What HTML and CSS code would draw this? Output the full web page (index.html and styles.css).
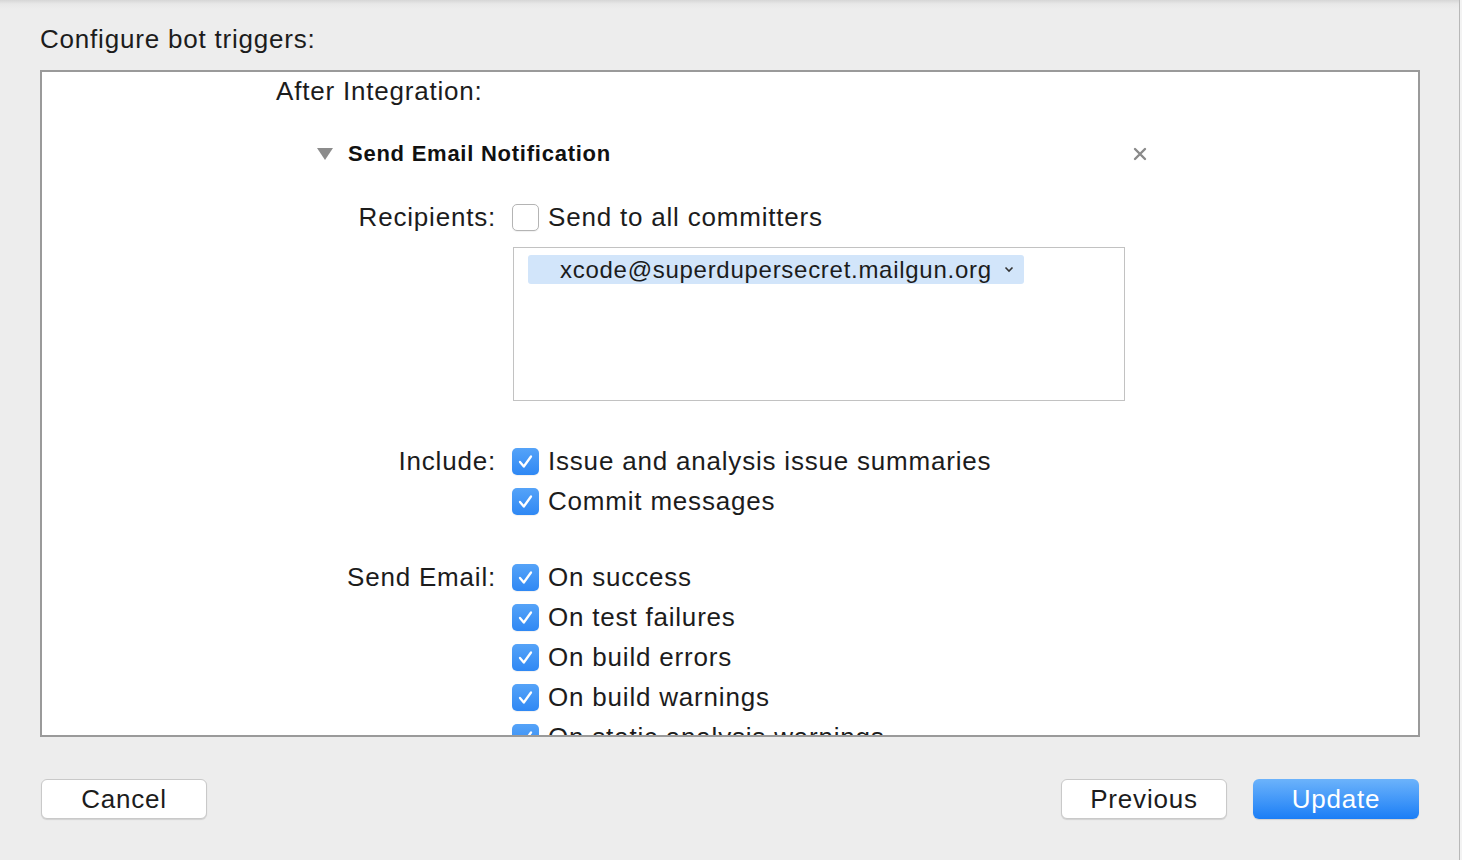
FILE: index.html
```html
<!DOCTYPE html>
<html>
<head>
<meta charset="utf-8">
<link rel="stylesheet" href="styles.css">
</head>
<body>
<div class="window">
  <div class="sheet">
    <div class="title">Configure bot triggers:</div>
    <div class="panel">
      <div class="after">After Integration:</div>
      <div class="section-head">
        <div class="head-left">
          <svg class="disclosure" width="16" height="12" viewBox="0 0 16 12"><polygon points="0,0 16,0 8,12" fill="#8c8c8c"/></svg>
          <span class="head-title">Send Email Notification</span>
        </div>
        <svg class="close" width="14" height="14" viewBox="0 0 14 14"><path d="M2 2 L12 12 M12 2 L2 12" stroke="#8a8a8a" stroke-width="2.4" stroke-linecap="round"/></svg>
      </div>

      <div class="row first">
        <div class="label">Recipients:</div>
        <div class="check"></div>
        <div class="text">Send to all committers</div>
      </div>
      <div class="recipients">
        <div class="token">xcode@superdupersecret.mailgun.org<svg class="chev" width="10" height="7" viewBox="0 0 10 7"><path d="M1.5 1.5 L5 5 L8.5 1.5" stroke="#333" stroke-width="1.6" fill="none"/></svg></div>
      </div>

      <div class="row gap40">
        <div class="label">Include:</div>
        <div class="check on"><svg width="27" height="27" viewBox="0 0 27 27"><path d="M8 14 L11.8 18.5 L19 8.5" stroke="#fff" stroke-width="2.3" fill="none" stroke-linecap="round" stroke-linejoin="round"/></svg></div>
        <div class="text">Issue and analysis issue summaries</div>
      </div>
      <div class="row">
        <div class="label"></div>
        <div class="check on"><svg width="27" height="27" viewBox="0 0 27 27"><path d="M8 14 L11.8 18.5 L19 8.5" stroke="#fff" stroke-width="2.3" fill="none" stroke-linecap="round" stroke-linejoin="round"/></svg></div>
        <div class="text">Commit messages</div>
      </div>

      <div class="row gap36">
        <div class="label">Send Email:</div>
        <div class="check on"><svg width="27" height="27" viewBox="0 0 27 27"><path d="M8 14 L11.8 18.5 L19 8.5" stroke="#fff" stroke-width="2.3" fill="none" stroke-linecap="round" stroke-linejoin="round"/></svg></div>
        <div class="text">On success</div>
      </div>
      <div class="row">
        <div class="label"></div>
        <div class="check on"><svg width="27" height="27" viewBox="0 0 27 27"><path d="M8 14 L11.8 18.5 L19 8.5" stroke="#fff" stroke-width="2.3" fill="none" stroke-linecap="round" stroke-linejoin="round"/></svg></div>
        <div class="text">On test failures</div>
      </div>
      <div class="row">
        <div class="label"></div>
        <div class="check on"><svg width="27" height="27" viewBox="0 0 27 27"><path d="M8 14 L11.8 18.5 L19 8.5" stroke="#fff" stroke-width="2.3" fill="none" stroke-linecap="round" stroke-linejoin="round"/></svg></div>
        <div class="text">On build errors</div>
      </div>
      <div class="row">
        <div class="label"></div>
        <div class="check on"><svg width="27" height="27" viewBox="0 0 27 27"><path d="M8 14 L11.8 18.5 L19 8.5" stroke="#fff" stroke-width="2.3" fill="none" stroke-linecap="round" stroke-linejoin="round"/></svg></div>
        <div class="text">On build warnings</div>
      </div>
      <div class="row">
        <div class="label"></div>
        <div class="check on"><svg width="27" height="27" viewBox="0 0 27 27"><path d="M8 14 L11.8 18.5 L19 8.5" stroke="#fff" stroke-width="2.3" fill="none" stroke-linecap="round" stroke-linejoin="round"/></svg></div>
        <div class="text">On static analysis warnings</div>
      </div>
    </div>

    <div class="buttons">
      <div class="btn">Cancel</div>
      <div class="spacer"></div>
      <div class="btn">Previous</div>
      <div class="btn primary">Update</div>
    </div>
  </div>
  <div class="edge"></div>
</div>
</body>
</html>
```
FILE: styles.css
```css
html, body {
  margin: 0;
  padding: 0;
}
body {
  width: 1462px;
  height: 860px;
  overflow: hidden;
  background: #ededed;
  font-family: "Liberation Sans", Arial, sans-serif;
  color: #1c1c1c;
  letter-spacing: 0.8px;
}
.window {
  display: flex;
  height: 860px;
}
.sheet {
  width: 1459px;
  box-sizing: border-box;
  padding: 24px 0 0 40px;
  background: linear-gradient(#d6d6d6 0px, #e8e8e8 4px, #ededed 9px, #ededed 100%);
}
.edge {
  width: 3px;
  box-sizing: border-box;
  border-left: 1px solid #b8b8b8;
  background: #f3f3f3;
}
.title {
  font-size: 26px;
  line-height: 30px;
  height: 30px;
  margin-bottom: 16px;
}
.panel {
  width: 1380px;
  height: 667px;
  box-sizing: border-box;
  border: 2px solid #9a9a9a;
  background: #fff;
  overflow: hidden;
}
.after {
  font-size: 26px;
  line-height: 30px;
  margin: 4px 0 0 234px;
}
.section-head {
  margin: 28px 0 0 275px;
  width: 830px;
  height: 40px;
  display: flex;
  align-items: center;
  justify-content: space-between;
}
.head-left {
  display: flex;
  align-items: center;
}
.disclosure {
  margin-right: 15px;
}
.head-title {
  font-size: 22px;
  font-weight: bold;
  color: #111;
  letter-spacing: 0.75px;
}
.row {
  display: flex;
  align-items: center;
  height: 40px;
}
.row.first { margin-top: 23px; }
.row.gap40 { margin-top: 40px; }
.row.gap36 { margin-top: 36px; }
.label {
  width: 454px;
  text-align: right;
  font-size: 26px;
  margin-right: 16px;
  flex: none;
}
.check {
  width: 27px;
  height: 27px;
  box-sizing: border-box;
  border-radius: 5px;
  border: 1px solid #b4b4b4;
  background: #fff;
  box-shadow: 0 1px 1px rgba(0,0,0,0.06);
  margin-right: 9px;
  flex: none;
  position: relative;
}
.check.on {
  border: none;
  background: linear-gradient(#55a3f8, #2f88f4);
}
.check.on svg {
  display: block;
}
.text {
  font-size: 26px;
  white-space: nowrap;
}
.recipients {
  margin: 10px 0 0 471px;
  width: 612px;
  height: 154px;
  box-sizing: border-box;
  border: 1px solid #c2c2c2;
  padding: 7px 0 0 14px;
}
.token {
  display: inline-flex;
  align-items: center;
  height: 29px;
  box-sizing: border-box;
  padding: 0 10px 0 32px;
  background: #d2e5fa;
  border-radius: 3px;
  font-size: 24px;
  letter-spacing: 0.72px;
  color: #1c1c1c;
}
.chev {
  margin-left: 12px;
}
.buttons {
  display: flex;
  margin: 42px 0 0 1px;
  width: 1378px;
}
.spacer { flex: 1; }
.btn {
  width: 166px;
  height: 40px;
  box-sizing: border-box;
  border: 1px solid #c9c9c9;
  border-radius: 6px;
  background: #fff;
  box-shadow: 0 1px 1px rgba(0,0,0,0.12);
  font-size: 26px;
  line-height: 38px;
  text-align: center;
  color: #1c1c1c;
}
.btn + .btn {
  margin-left: 26px;
}
.btn.primary {
  border: none;
  background: linear-gradient(#6cb3fb, #1b7ef6);
  color: #fff;
  line-height: 40px;
}
```
